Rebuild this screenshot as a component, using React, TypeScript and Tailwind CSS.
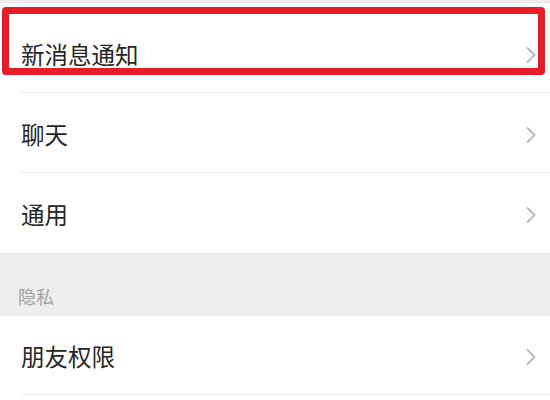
const font = { fontFamily: '"Noto Sans CJK SC", "Noto Sans", sans-serif' };

type RowProps = { label: string; divider?: boolean; first?: boolean; last?: boolean };

function Chevron() {
  return (
    <svg width="12" height="18" viewBox="0 0 12 18" className="shrink-0">
      <path d="M2 1.5 L9.5 9 L2 16.5" fill="none" stroke="#b5b5b5" strokeWidth="1.8" />
    </svg>
  );
}

function Row({ label, divider = true, first = false, last = false }: RowProps) {
  return (
    <div className={`bg-white pl-[21px] ${first ? 'pt-[10px]' : ''}`}>
      <div
        className={`flex items-center pr-[13px] pt-[4px] ${last ? 'h-[79px]' : 'h-[80px]'} ${
          divider ? 'border-b border-[#ececec]' : ''
        }`}
      >
        <span className="flex-1 text-[23.5px] leading-none text-[#262626]">{label}</span>
        <Chevron />
      </div>
    </div>
  );
}

export default function App() {
  return (
    <div className="relative h-[400px] w-[550px] overflow-hidden bg-white" style={font}>
      <div className="h-[3px] bg-[#ededed]" />
      <Row label="新消息通知" first />
      <Row label="聊天" />
      <Row label="通用" divider={false} />
      <div className="flex h-[63px] items-end bg-[#ededed] pb-[11px] pl-[18px]">
        <span className="text-[18px] leading-none text-[#a0a0a0]">隐私</span>
      </div>
      <Row label="朋友权限" last />

      {/* annotation box */}
      <div className="absolute left-[2px] top-[7px] h-[68px] w-[543px] rounded-[4px] border-[7px] border-[#e81c26]" />
    </div>
  );
}
